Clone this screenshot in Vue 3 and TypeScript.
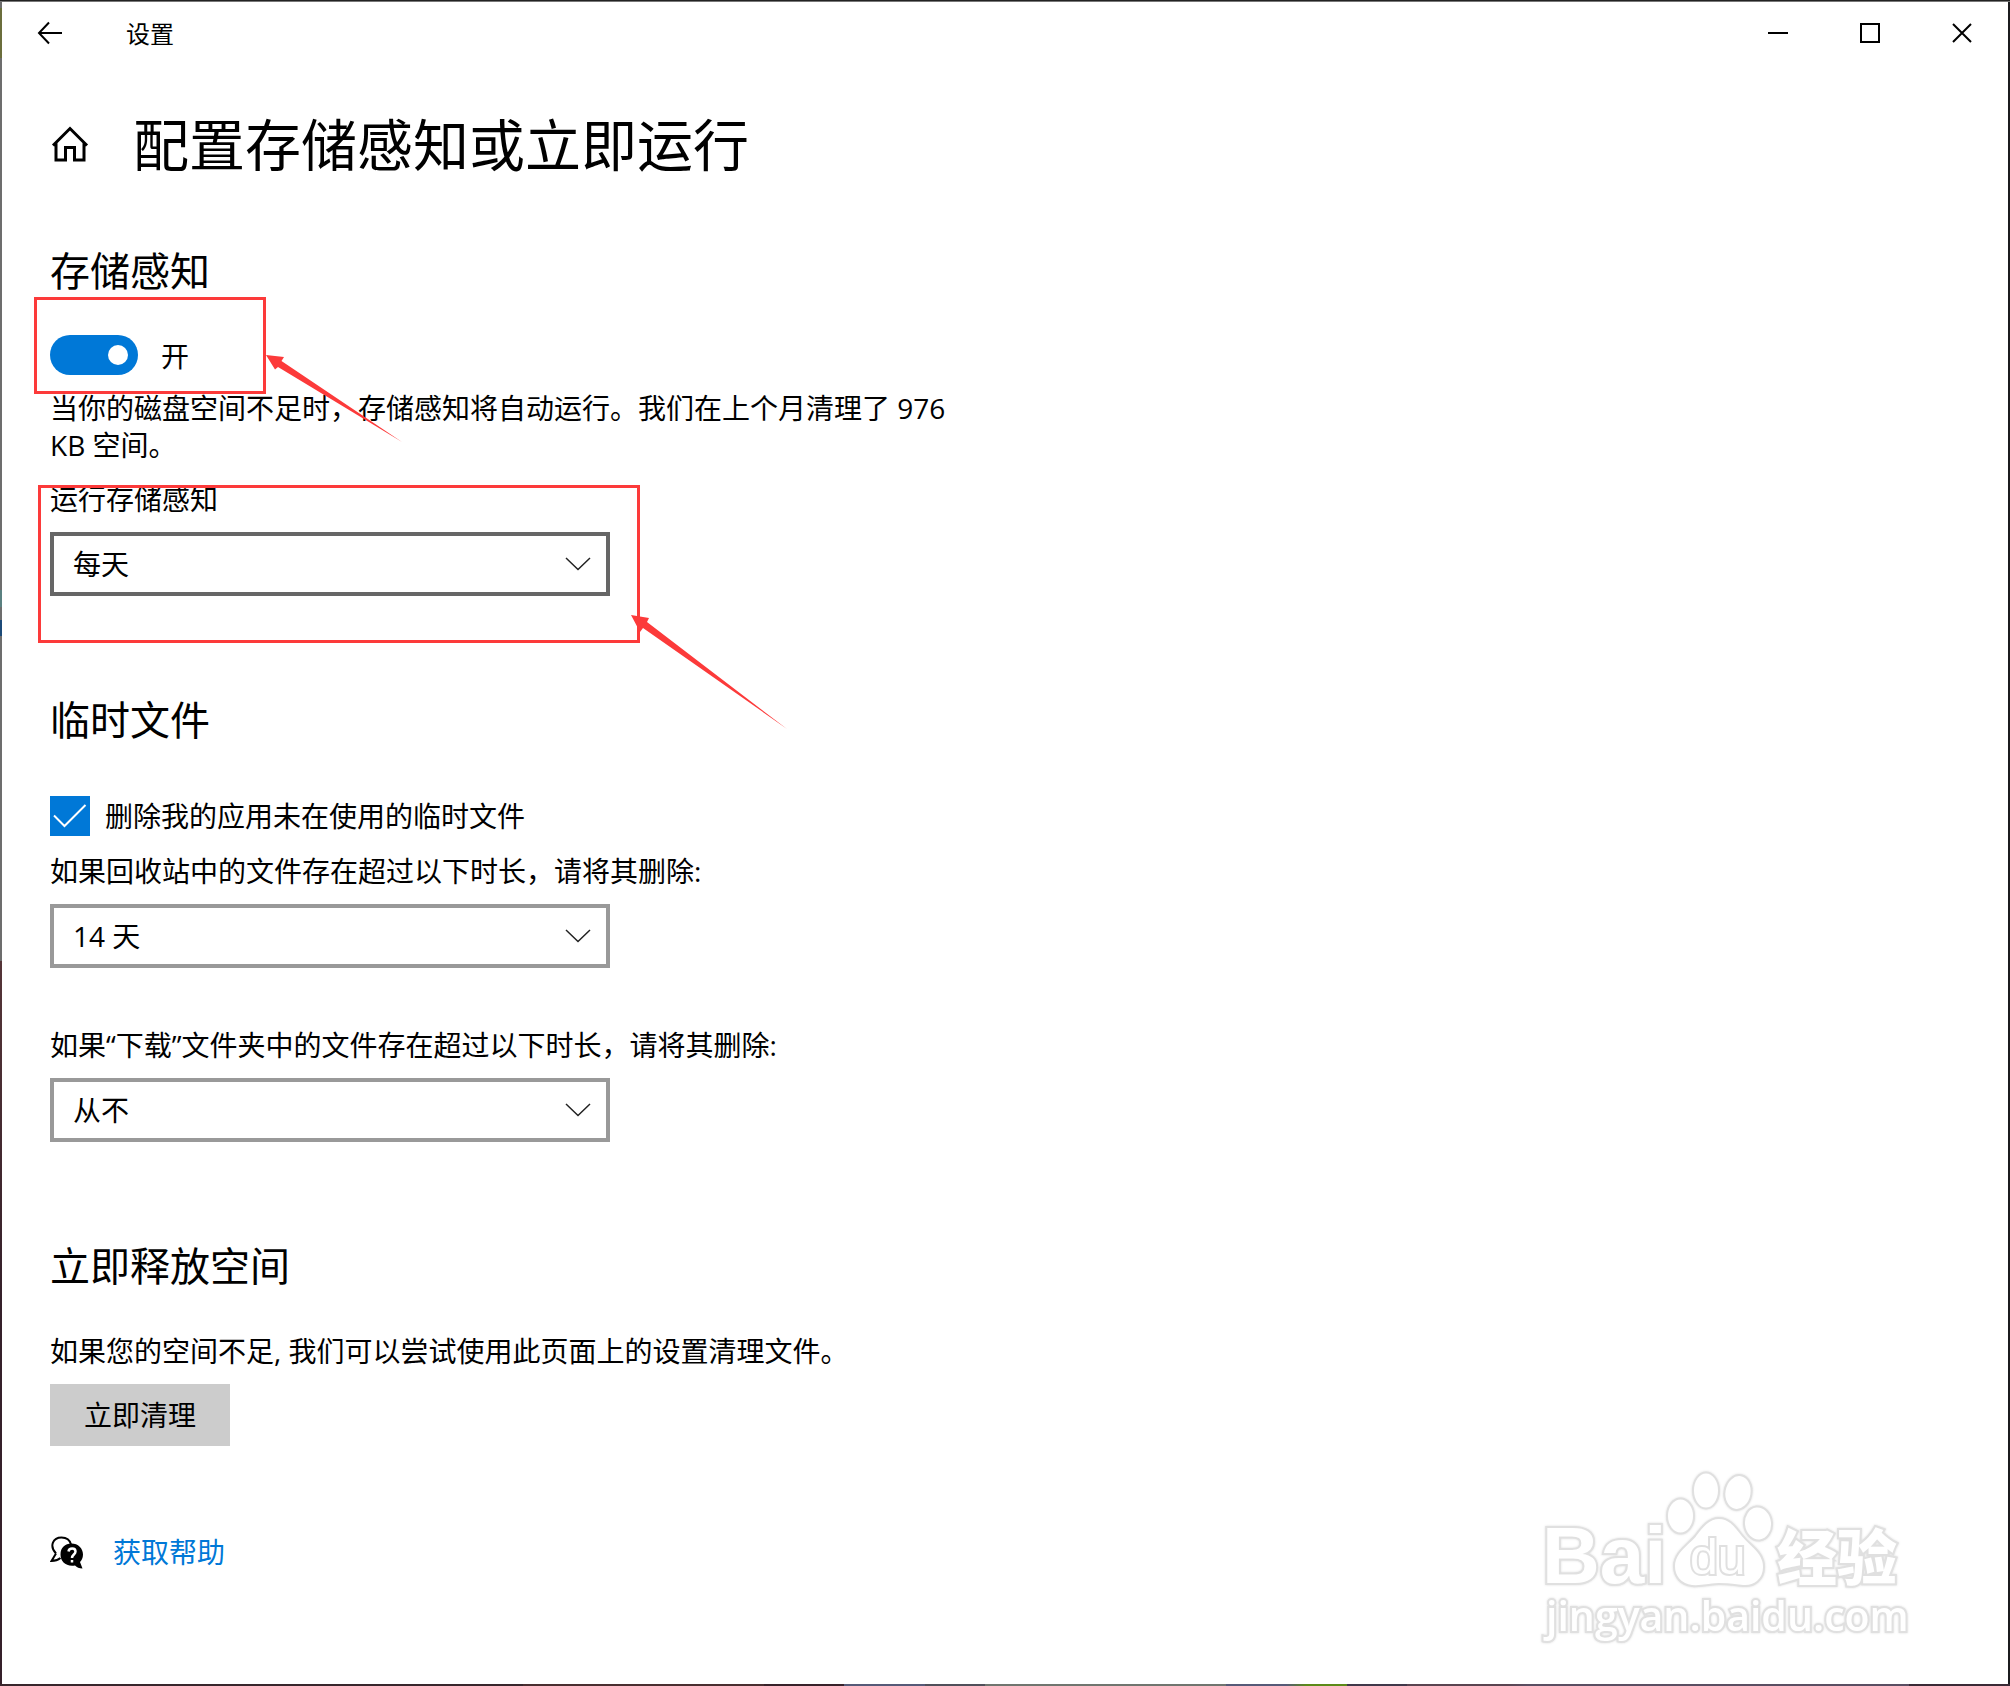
<script setup lang="ts">
import { ref } from 'vue'

const senseOn = ref(true)
const deleteTemp = ref(true)
const runWhen = ref('每天')
const recycleAge = ref('14 天')
const downloadAge = ref('从不')

const runOptions = ['每天', '每周', '每月', '可用磁盘空间不足时']
const ageOptions = ['从不', '1 天', '14 天', '30 天', '60 天']
</script>

<template>
  <div class="desktop">
    <div class="window">
      <header class="titlebar">
        <button class="back" type="button" aria-label="后退">
          <svg width="26" height="24" viewBox="0 0 26 24">
            <path d="M12 1.500 2 12l10 10.500M2 12h23" />
          </svg>
        </button>
        <span class="app-name">设置</span>
        <div class="controls">
          <button type="button" aria-label="最小化">
            <svg width="20" height="20" viewBox="0 0 20 20"><path d="M0 10h20" /></svg>
          </button>
          <button type="button" aria-label="最大化">
            <svg width="20" height="20" viewBox="0 0 20 20"><path d="M1 1h18v18H1z" /></svg>
          </button>
          <button type="button" aria-label="关闭">
            <svg width="20" height="20" viewBox="0 0 20 20"><path d="M1 1l18 18M19 1 1 19" /></svg>
          </button>
        </div>
      </header>

      <main class="page">
        <div class="heading">
          <svg class="home" width="40" height="38" viewBox="0 0 40 38">
            <path d="M3 20.500 20 3.500 37 20.500M6 17.500V35h9.500V22.500h9V35H34V17.500" />
          </svg>
          <h1>配置存储感知或立即运行</h1>
        </div>

        <section class="sense">
          <h2>存储感知</h2>
          <div class="toggle-row">
            <input id="sense" v-model="senseOn" class="toggle" type="checkbox" role="switch" />
            <label for="sense">{{ senseOn ? '开' : '关' }}</label>
            <div class="mark mark-toggle">
              <svg width="136" height="88" viewBox="0 0 136 88">
                <path d="M0 0 18 2 15.500 6 136 87 12 12 9 14.500Z" />
              </svg>
            </div>
          </div>
          <p class="intro">当你的磁盘空间不足时，存储感知将自动运行。我们在上个月清理了 976 KB 空间。</p>
          <div class="field first">
            <label for="run">运行存储感知</label>
            <div class="combo focused">
              <select id="run" v-model="runWhen">
                <option v-for="o in runOptions" :key="o">{{ o }}</option>
              </select>
              <svg width="26" height="14" viewBox="0 0 26 14"><path d="M1 1l12 11.500L25 1" /></svg>
            </div>
            <div class="mark mark-field">
              <svg width="156" height="114" viewBox="0 0 156 114">
                <path d="M0 0 18 3 16 7 156 114 12 13 9 17Z" />
              </svg>
            </div>
          </div>
        </section>

        <section>
          <h2>临时文件</h2>
          <div class="check-row">
            <span class="check">
              <input id="temp" v-model="deleteTemp" type="checkbox" />
              <svg v-if="deleteTemp" width="40" height="40" viewBox="0 0 40 40">
                <path d="M4 19.500 14.500 30 35.500 9" />
              </svg>
            </span>
            <label for="temp">删除我的应用未在使用的临时文件</label>
          </div>
          <div class="field first">
            <label for="recycle">如果回收站中的文件存在超过以下时长，请将其删除:</label>
            <div class="combo">
              <select id="recycle" v-model="recycleAge">
                <option v-for="o in ageOptions" :key="o">{{ o }}</option>
              </select>
              <svg width="26" height="14" viewBox="0 0 26 14"><path d="M1 1l12 11.500L25 1" /></svg>
            </div>
          </div>
          <div class="field next">
            <label for="download">如果“下载”文件夹中的文件存在超过以下时长，请将其删除:</label>
            <div class="combo">
              <select id="download" v-model="downloadAge">
                <option v-for="o in ageOptions" :key="o">{{ o }}</option>
              </select>
              <svg width="26" height="14" viewBox="0 0 26 14"><path d="M1 1l12 11.500L25 1" /></svg>
            </div>
          </div>
        </section>

        <section>
          <h2>立即释放空间</h2>
          <p class="free">如果您的空间不足, 我们可以尝试使用此页面上的设置清理文件。</p>
          <button class="clean" type="button">立即清理</button>
        </section>

        <div class="help">
          <svg width="34" height="34" viewBox="0 0 34 34">
            <path
              class="bubble-line"
              d="M6 17.500C-1 10 3 1.500 11.500 1.500c5 0 8.500 3 9.500 7M6 17.500 1.500 25c4 0 6.500-1 9-3"
            />
            <path
              class="bubble"
              d="M21.500 7.500c6.500 0 11.500 4.800 11.500 11 0 3.500-1.500 6-3 7.500l2.500 6.500c-3.500 0-5.500-1-7.500-3-9 1.500-14.500-4-14.500-11s4.500-11 11-11Z"
            />
            <path
              class="question"
              d="M18.500 15.500c.5-4 7-4 7 0 0 3-3.500 3-3.500 6.500M22 24v2.500"
            />
          </svg>
          <a href="#">获取帮助</a>
        </div>
      </main>

      <svg class="watermark" width="380" height="190" viewBox="0 0 380 190" aria-hidden="true">
        <g class="outline">
          <text class="bai" x="1" y="113">Bai</text>
          <ellipse cx="139.500" cy="46" rx="13.500" ry="17.500" />
          <ellipse cx="165" cy="20.500" rx="13" ry="18" />
          <ellipse cx="197" cy="22.500" rx="13.500" ry="17.500" transform="rotate(10 197 22.500)" />
          <ellipse cx="217" cy="53.500" rx="14" ry="17" transform="rotate(-6 217 53.500)" />
          <path
            d="M178 48c12 0 18 11 24 18 8 10 21 16 21 31 0 13-10 20-21 19-9-1-16-2-24-2s-17 3-27 2c-11-1-18-9-18-20 0-13 12-20 21-30 6-8 13-18 24-18Z"
          />
          <text class="du" x="149" y="104">du</text>
          <text class="jy" x="236" y="110">经验</text>
          <text class="site" x="5" y="161">jingyan.baidu.com</text>
        </g>
      </svg>
    </div>
  </div>
</template>

<style>
body {
  margin: 0;
}
</style>

<style scoped>
.desktop {
  box-sizing: border-box;
  min-height: 100vh;
  padding: 2px;
  display: flex;
  background:
    linear-gradient(#222 50%, #777 50%) top / 100% 2px no-repeat,
    linear-gradient(
        to right,
        #38262c 0 26%,
        #4a2e30 26% 38%,
        #38222a 38% 42%,
        #565a78 42% 46%,
        #50505a 46% 49%,
        #70756f 49% 61%,
        #565a78 61% 64%,
        #5c8a18 65% 67%,
        #40384a 67% 70%,
        #5a4450 70% 75%,
        #5a4e62 76% 95%,
        #3a2a36 95%
      )
      bottom / 100% 2px no-repeat,
    linear-gradient(
        #6d6d6d 0 8px,
        #6b6e3c 8px 58px,
        #6d6d6d 58px 590px,
        #5a8080 590px 607px,
        #6d6d6d 607px 620px,
        #1c4a78 620px 636px,
        #6d6d6d 636px 961px,
        #553538 961px,
        #35202a 1300px
      )
      left / 2px 100% no-repeat,
    #1b1b1e;
  font-family: 'Open Sans', 'Noto Sans CJK SC', sans-serif;
  font-size: 28px;
  line-height: 37px;
  color: #000;
}

.window {
  position: relative;
  flex: 1;
  min-width: 0;
  background: #fff;
}

svg {
  display: block;
  flex: none;
  fill: none;
  stroke: #000;
  stroke-width: 2;
}

button,
select {
  font: inherit;
  color: inherit;
  border: 0;
  border-radius: 0;
}

input {
  appearance: none;
  margin: 0;
}

h1,
h2,
p {
  margin: 0;
  font-weight: 400;
}

.titlebar {
  display: flex;
  align-items: center;
  height: 62px;
}

.titlebar button {
  display: flex;
  align-items: center;
  justify-content: center;
  height: 62px;
  padding: 0;
  background: none;
}

.titlebar .back {
  width: 96px;
}

.app-name {
  margin-left: 28px;
  font-size: 24px;
}

.controls {
  display: flex;
  margin-left: auto;
}

.controls button {
  width: 92px;
}

.page {
  padding: 42px 48px 112px;
}

.heading {
  display: flex;
  align-items: center;
  gap: 43px;
}

.home {
  stroke-width: 3;
}

h1 {
  font-size: 56px;
  line-height: 76px;
}

h2 {
  font-size: 40px;
  line-height: 52px;
}

section {
  margin-top: 98px;
}

.sense {
  margin-top: 63px;
}

.toggle-row {
  position: relative;
  display: flex;
  align-items: flex-end;
  gap: 23px;
  margin-top: 38px;
}

.toggle {
  display: flex;
  align-items: center;
  box-sizing: border-box;
  width: 88px;
  height: 40px;
  padding: 0 10px;
  border-radius: 20px;
  background: #999;
}

.toggle::before {
  content: '';
  width: 20px;
  height: 20px;
  border-radius: 50%;
  background: #fff;
}

.toggle:checked {
  justify-content: flex-end;
  background: #0078d7;
}

.intro {
  max-width: 900px;
  margin-top: 15px;
}

.field {
  position: relative;
  display: flex;
  flex-direction: column;
  gap: 14px;
}

.field.first {
  margin-top: 17px;
}

.field.next {
  margin-top: 59px;
}

.combo {
  display: grid;
  align-items: center;
  max-width: 560px;
}

.combo select {
  grid-area: 1 / 1;
  appearance: none;
  box-sizing: border-box;
  width: 100%;
  height: 64px;
  padding: 0 60px 0 19px;
  border: 4px solid #999;
  background: #fff;
}

.combo.focused select {
  border-color: #666;
}

.combo svg {
  grid-area: 1 / 1;
  justify-self: end;
  margin-right: 19px;
  stroke: #222;
  stroke-width: 1.5;
  pointer-events: none;
}

.check-row {
  display: flex;
  align-items: center;
  gap: 15px;
  margin-top: 50px;
}

.check {
  display: grid;
}

.check input {
  grid-area: 1 / 1;
  width: 40px;
  height: 40px;
  border: 4px solid #666;
}

.check input:checked {
  border: 0;
  background: #0078d7;
}

.check svg {
  grid-area: 1 / 1;
  stroke: #fff;
  pointer-events: none;
}

.free {
  margin-top: 41px;
}

.clean {
  height: 62px;
  margin-top: 14px;
  padding: 0 34px;
  background: #ccc;
}

.help {
  display: flex;
  align-items: center;
  gap: 29px;
  margin-top: 88px;
}

.help a {
  color: #0078d7;
  text-decoration: none;
}

.bubble {
  fill: #000;
  stroke: none;
}

.question {
  stroke: #fff;
  stroke-width: 2.5;
}

.mark {
  position: absolute;
  box-sizing: border-box;
  border: 3px solid #fc3a3a;
  pointer-events: none;
}

.mark svg {
  position: absolute;
  fill: #fc3a3a;
  stroke: none;
}

.mark-toggle {
  top: -38px;
  left: -16px;
  width: 232px;
  height: 97px;
}

.mark-toggle svg {
  top: 55px;
  left: 229px;
}

.mark-field {
  top: 4px;
  left: -12px;
  width: 602px;
  height: 158px;
}

.mark-field svg {
  top: 127px;
  left: 590px;
}

.watermark {
  position: absolute;
  right: 87px;
  bottom: 24px;
  overflow: visible;
}

.outline {
  fill: #fff;
  stroke: #e0e0e0;
  stroke-width: 2;
  filter: drop-shadow(0 0 1px #ddd);
}

.outline text {
  paint-order: stroke;
  stroke-width: 4;
}

.bai {
  font: bold 80px 'Liberation Sans', sans-serif;
}

.du {
  font: 50px 'Liberation Sans', sans-serif;
}

.jy {
  font: 900 60px 'Noto Sans CJK SC', sans-serif;
}

.site {
  font: 600 41px 'Open Sans', sans-serif;
}
</style>
